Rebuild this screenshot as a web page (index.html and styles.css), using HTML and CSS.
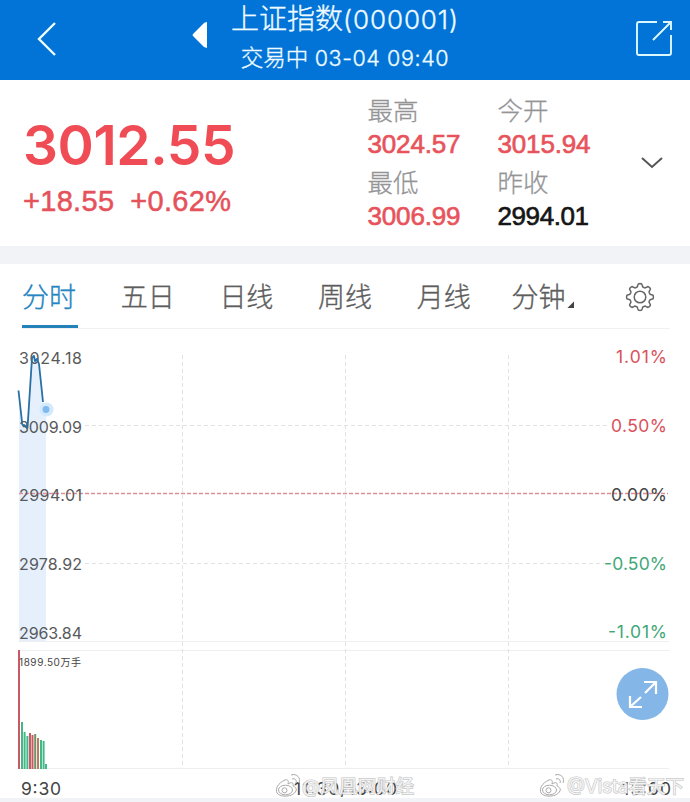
FILE: index.html
```
<!DOCTYPE html>
<html lang="zh-CN">
<head>
  <meta charset="UTF-8" />
  <meta name="viewport" content="width=device-width, initial-scale=1" />
  <title>上证指数(000001)</title>
  <link rel="stylesheet" href="styles.css">
</head>
<body>
  <header class="topbar">
    <svg class="back" width="20" height="38" viewBox="0 0 20 38"><path d="M18 3 L2 19 L18 35" /></svg>
    <svg class="prev" width="16" height="28" viewBox="0 0 16 28"><path d="M15 1 V27 Q12 27 10 24 L1 15 Q0 14 1 13 L10 4 Q12 1 15 1Z" /></svg>
    <div class="heading">
      <h1>上证指数<span>(000001)</span></h1>
      <p>交易中 <span>03-04 09:40</span></p>
    </div>
    <svg class="share" width="38" height="38" viewBox="0 0 38 38">
      <path d="M22 2 H4 Q2 2 2 4 V33 Q2 35 4 35 H34 Q36 35 36 33 V15" />
      <path d="M28 2 H36 V10 M36 2 L18 20" />
    </svg>
  </header>

  <section class="quote">
    <div class="now">
      <div class="price">3012.55</div>
      <div class="change"><span>+18.55</span><span>+0.62%</span></div>
    </div>
    <dl class="stats">
      <div><dt>最高</dt><dd>3024.57</dd></div>
      <div><dt>今开</dt><dd>3015.94</dd></div>
      <div><dt>最低</dt><dd>3006.99</dd></div>
      <div><dt>昨收</dt><dd class="flat">2994.01</dd></div>
    </dl>
    <svg class="more" width="24" height="14" viewBox="0 0 24 14"><path d="M2 2 L12 11 L22 2" /></svg>
  </section>

  <nav class="tabs">
    <a class="active">分时</a>
    <a>五日</a>
    <a>日线</a>
    <a>周线</a>
    <a>月线</a>
    <a class="minute">分钟<i></i></a>
    <svg class="gear" width="30" height="30" viewBox="-15 -15 30 30">
      <path id="gearPath" />
      <circle r="5.8" />
    </svg>
  </nav>

  <svg class="chart" width="690" height="469" viewBox="0 329 690 469">
    <!-- price area and grid -->
    <path class="area" d="M19 390 L22 425 L27 427 L32 358 L38 360 L43 401 L46 410 V641 H19Z" />
    <path class="rule" d="M19 641.5 H669 M19 650.5 H669 M19 768.5 H669" />
    <path class="grid" d="M85 425.5 H610 M85 563.5 H604" />
    <path class="grid" d="M182.5 355 V768 M345.5 355 V768 M508.5 355 V768" />
    <path class="zero" d="M19 493.5 H668" />
    <g class="labels">
      <text x="19" y="364" textLength="63">3024.18</text>
      <text x="19" y="433" textLength="63">3009.09</text>
      <text x="19" y="501" textLength="63">2994.01</text>
      <text x="19" y="570" textLength="63">2978.92</text>
      <text x="19" y="639" textLength="63">2963.84</text>
    </g>
    <g class="labels percent">
      <text class="up" x="616" y="363" textLength="51">1.01%</text>
      <text class="up" x="611" y="432" textLength="56">0.50%</text>
      <text class="zero-label" x="611" y="501" textLength="56">0.00%</text>
      <text class="down" x="604" y="570" textLength="63">-0.50%</text>
      <text class="down" x="608" y="638" textLength="59">-1.01%</text>
    </g>
    <path class="line" d="M18.5 390.5 L22 422 Q22 426 24 425 L27.5 428 L32 358 L34 356 L35 361 L37 359 L39 364 L43 402" />
    <circle class="halo" cx="46.5" cy="409.5" r="7" />
    <circle class="dot" cx="46" cy="409.5" r="3.4" />

    <!-- volume -->
    <g id="volume"></g>
    <text class="volume-label" x="19" y="666" textLength="62">1899.50万手</text>

    <g class="times">
      <text x="21" y="795" textLength="40">9:30</text>
      <text x="294" y="795" textLength="103">11:30/13:00</text>
      <text x="622" y="795" textLength="49">15:00</text>
    </g>

    <g class="expand">
      <circle cx="642.5" cy="694" r="26" />
      <path d="M645 693 L656 682 M644 682 H656 V694 M641 697 L630 707 M630 696 V707 H642" />
    </g>

    <defs>
      <g id="weibo">
        <path d="M10 7 C3 10 0 16 2 20 C6 25 18 24 21 18 C22 15 20 14 18 13 C19 9 16 9 13 11 C14 7 12 6 10 7Z" />
        <ellipse cx="10.500" cy="17" rx="7" ry="4.800" />
        <circle cx="9.500" cy="17.300" r="2.500" />
        <path d="M16 2 C22 0 26 5 24 10 M17 6 C20 5 22 7 21 10" />
      </g>
    </defs>
    <g class="watermark">
      <use href="#weibo" x="275" y="773" />
      <text x="302" y="793" textLength="112">@凤凰网财经</text>
      <use href="#weibo" x="539" y="773" />
      <text x="567" y="793" textLength="117">@Vista看天下</text>
    </g>
  </svg>

  <script src="script.js"></script>
</body>
</html>
```
FILE: styles.css
```
* { box-sizing: border-box; }
body { margin: 0; width: 690px; height: 802px; overflow: hidden; background: #f2f3f7; color: #555; font-family: Inter, "Noto Sans CJK SC", sans-serif; }
svg { display: block; fill: none; }
h1, p, dl, dd { margin: 0; }

.topbar { display: flex; height: 80px; background: #0273d7; color: #effcff; }
.back { margin: 20px 0 0 37px; stroke: #effcff; stroke-width: 2.4; }
.prev { margin: 21px 0 0 135px; fill: #fff; }
.heading { width: 260px; margin-left: 7px; text-align: center; }
.heading h1 { height: 38px; font-size: 28px; line-height: 38px; font-weight: 300; white-space: nowrap; -webkit-text-stroke: 0.35px; }
.heading h1 span { font-size: 26px; letter-spacing: 0.9px; }
.heading p { font-size: 22.5px; line-height: 40px; font-weight: 300; white-space: nowrap; -webkit-text-stroke: 0.35px; }
.heading p span { font-size: 21.5px; letter-spacing: 0.6px; }
.share { margin: 20px 0 0 160px; stroke: #dcf8ff; stroke-width: 1.9; }

.quote { display: flex; height: 166px; background: #fff; color: #ef4c55; }
.now { width: 344px; padding: 37px 0 0 23px; }
.price { font-size: 55px; line-height: 56px; font-weight: 600; letter-spacing: -0.4px; }
.change { display: flex; gap: 16px; margin-top: 11px; font: 29px/34px "Liberation Sans", sans-serif; letter-spacing: 0.3px; color: #e5525a; -webkit-text-stroke: 0.5px; }
.stats { display: grid; grid-template-columns: 130px 130px; grid-template-rows: 72px 72px; width: 284px; padding: 13px 0 0 23.5px; }
.stats dt { height: 34px; color: #949496; font-size: 25.5px; line-height: 35px; font-weight: 300; -webkit-text-stroke: 0.3px; }
.stats dd { font: 26px/34px "Liberation Sans", sans-serif; letter-spacing: -0.15px; -webkit-text-stroke: 0.65px; color: #e8535b; }
.stats .flat { color: #151515; letter-spacing: -0.4px; }
.more { margin: 76px 0 0 12px; stroke: #555; stroke-width: 2; }

.tabs { display: flex; height: 65px; margin-top: 18px; padding-left: 22px; background: linear-gradient(#f1f1f3, #f1f1f3) 22px 64px / 648px 1px no-repeat #fff; }
.tabs a { width: 56px; height: 64px; margin-right: 42.7px; font-size: 27px; line-height: 67px; font-weight: 300; color: #5d5d5d; white-space: nowrap; -webkit-text-stroke: 0.35px; }
.tabs .active { color: #2685c2; border-bottom: 3px solid #2581ba; }
.tabs .minute { display: flex; width: 66px; margin: 0 48px 0 -4px; }
.minute i { flex: none; width: 7px; height: 7px; margin: 37px 0 0 2px; background: #444; clip-path: polygon(100% 0, 100% 100%, 0 100%); }
.gear { flex: none; margin-top: 18px; stroke: #666; stroke-width: 1.5; stroke-linejoin: round; }

.chart { background: #fff; }
.chart text { stroke: none; }
.area { fill: #e5f0fc; }
.rule { stroke: #eeeef0; }
.grid { stroke: #e2e2e5; stroke-dasharray: 4 3; }
.zero { stroke: #e08f9a; stroke-width: 1.4; stroke-dasharray: 4 2; }
.labels { font-size: 16px; fill: #58595b; }
.percent { font-size: 17.5px; }
.labels .up { fill: #d9515c; }
.labels .down { fill: #3fa778; }
.labels .zero-label { fill: #444; }
.line { stroke: #286fa5; stroke-width: 1.8; stroke-linejoin: round; }
.halo { fill: #d3e9fc; }
.dot { fill: #80b9ee; }
.red { fill: #c95965; }
.green { fill: #42b987; }
.brown { fill: #bd7b66; }
.olive { fill: #6c9566; }
.volume-label { font-size: 10px; fill: #444; }
.times { font-size: 17.5px; fill: #444; }
.expand circle { fill: #84b7e7; }
.expand path { stroke: #fff; stroke-width: 2.2; }
.watermark { stroke: #aaa; stroke-width: 1; font-size: 18.5px; }
.watermark use { fill: #fff; }
.chart .watermark text { fill: #fff; fill-opacity: 0.8; stroke: #c4c4c4; stroke-width: 1.2px; paint-order: stroke; }
```
FILE: script.js
```
const bars = [
  [18, 650, "red"],
  [21, 722, "green"],
  [23.600, 732, "green"],
  [26.400, 736, "green"],
  [29, 733, "red"],
  [31.500, 735, "red"],
  [34.200, 734, "olive"],
  [37, 738, "brown"],
  [40, 740, "green"],
  [42.600, 741, "green"],
  [45, 764, "green"]
];

const volume = document.getElementById("volume");
bars.forEach(([x, top, color]) => {
  const rect = document.createElementNS("http://www.w3.org/2000/svg", "rect");
  rect.setAttribute("x", x);
  rect.setAttribute("y", top);
  rect.setAttribute("width", 2);
  rect.setAttribute("height", 769 - top);
  rect.setAttribute("class", color);
  volume.appendChild(rect);
});

// eight rounded teeth
let d = "";
for (let i = 0; i <= 96; i++) {
  const a = i / 96 * Math.PI * 2;
  const r = 11.8 + 1.6 * Math.tanh(2.5 * Math.cos(8 * a));
  d += (i ? "L" : "M") + (r * Math.cos(a)).toFixed(2) + " " + (r * Math.sin(a)).toFixed(2);
}
document.getElementById("gearPath").setAttribute("d", d + "Z");
```
